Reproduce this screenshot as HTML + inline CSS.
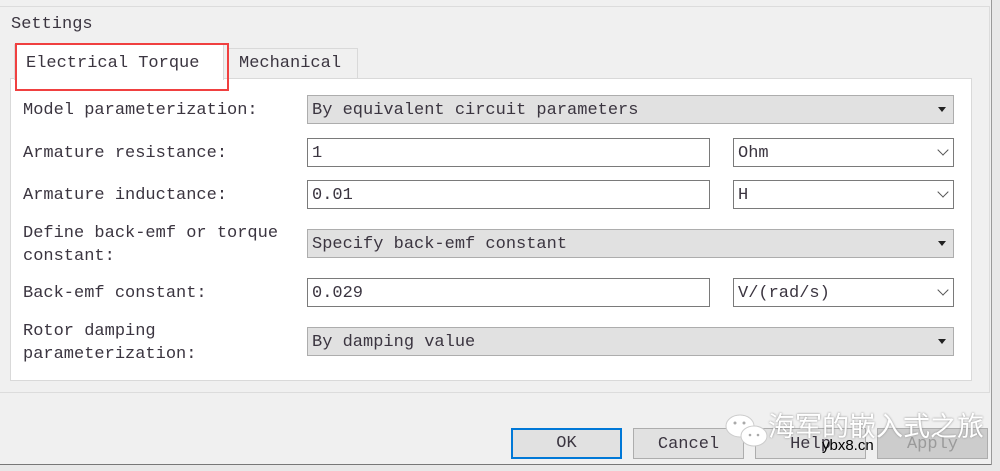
<!DOCTYPE html>
<html><head><style>
body{margin:0;width:1000px;height:471px;background:#f0f0f0;position:relative;overflow:hidden;font-family:"Liberation Mono","Noto Sans CJK SC",monospace;font-size:17px;color:#3b3540}
.a{position:absolute;box-sizing:border-box}
.lbl{line-height:23px}
.dd{background:#e1e1e1;border:1px solid #adadad;padding-left:4px;line-height:29px}
.tf{background:#fff;border:1px solid #7a7a7a;padding-left:4px;line-height:29px}
.tri{position:absolute;right:7px;top:11px;width:0;height:0;border-left:4px solid transparent;border-right:4px solid transparent;border-top:5px solid #222}
.chev{position:absolute;right:6px;top:7px;width:7px;height:7px;border-right:1px solid #555;border-bottom:1px solid #555;transform:rotate(45deg)}
.btn{background:#e1e1e1;border:1px solid #adadad;text-align:center;line-height:31px}
</style></head><body>
<div class="a" style="left:0;top:6px;width:990px;height:387px;border:1px solid #dcdcdc;border-left:none"></div>
<div class="a" style="left:8px;top:14px;background:#f0f0f0;padding:0 3px;line-height:22px">Settings</div>
<div class="a" style="left:228px;top:48px;width:130px;height:32px;border:1px solid #d9d9d9;border-bottom:none;background:#f0f0f0;padding:5px 0 0 10px">Mechanical</div>
<div class="a" style="left:10px;top:78px;width:962px;height:303px;background:#fff;border:1px solid #d9d9d9"></div>
<div class="a" style="left:14px;top:44px;width:210px;height:36px;background:#fff;border:1px solid #d9d9d9;border-bottom:none;padding:9px 0 0 11px">Electrical Torque</div>
<div class="a" style="left:15px;top:43px;width:214px;height:48px;border:2px solid #f04040"></div>

<div class="a lbl" style="left:23px;top:99px">Model parameterization:</div>
<div class="a dd" style="left:307px;top:95px;width:647px;height:29px">By equivalent circuit parameters<div class="tri"></div></div>

<div class="a lbl" style="left:23px;top:142px">Armature resistance:</div>
<div class="a tf" style="left:307px;top:138px;width:403px;height:29px">1</div>
<div class="a tf" style="left:733px;top:138px;width:221px;height:29px">Ohm<div class="chev"></div></div>

<div class="a lbl" style="left:23px;top:184px">Armature inductance:</div>
<div class="a tf" style="left:307px;top:180px;width:403px;height:29px">0.01</div>
<div class="a tf" style="left:733px;top:180px;width:221px;height:29px">H<div class="chev"></div></div>

<div class="a lbl" style="left:23px;top:222px">Define back-emf or torque<br>constant:</div>
<div class="a dd" style="left:307px;top:229px;width:647px;height:29px">Specify back-emf constant<div class="tri"></div></div>

<div class="a lbl" style="left:23px;top:282px">Back-emf constant:</div>
<div class="a tf" style="left:307px;top:278px;width:403px;height:29px">0.029</div>
<div class="a tf" style="left:733px;top:278px;width:221px;height:29px">V/(rad/s)<div class="chev"></div></div>

<div class="a lbl" style="left:23px;top:320px">Rotor damping<br>parameterization:</div>
<div class="a dd" style="left:307px;top:327px;width:647px;height:29px">By damping value<div class="tri"></div></div>

<div class="a" style="left:0;top:464px;width:1000px;height:7px;border-top:1px solid #777;background:#e8e8e8"></div>
<div class="a" style="left:991px;top:0;width:9px;height:465px;border-left:1px solid #999;background:#e8e8e8"></div>

<div class="a btn" style="left:511px;top:428px;width:111px;height:31px;border:2px solid #0078d7;line-height:28px">OK</div>
<div class="a btn" style="left:633px;top:428px;width:111px;height:31px">Cancel</div>
<div class="a btn" style="left:755px;top:428px;width:111px;height:31px">Help</div>
<div class="a btn" style="left:877px;top:428px;width:111px;height:31px;background:#cccccc;color:#9a9a9a">Apply</div>

<svg class="a" style="left:722px;top:410px" width="50" height="40"><ellipse cx="18" cy="16" rx="14" ry="11" fill="#fff" stroke="#ccc"/><ellipse cx="32" cy="26" rx="13" ry="10" fill="#fff" stroke="#ccc"/><circle cx="13" cy="13" r="1.5" fill="#aaa"/><circle cx="22" cy="13" r="1.5" fill="#aaa"/><circle cx="28" cy="25" r="1.3" fill="#aaa"/><circle cx="36" cy="25" r="1.3" fill="#aaa"/></svg>
<div class="a" style="left:768px;top:410px;font-family:'Liberation Sans','Noto Sans CJK SC',sans-serif;font-size:27px;color:#fff;text-shadow:0 0 2px #888;line-height:34px">海军的嵌入式之旅</div>
<div class="a" style="left:822px;top:438px;font-family:'Liberation Sans',sans-serif;font-size:15px;color:#000;line-height:16px">ybx8.cn</div>
</body></html>
